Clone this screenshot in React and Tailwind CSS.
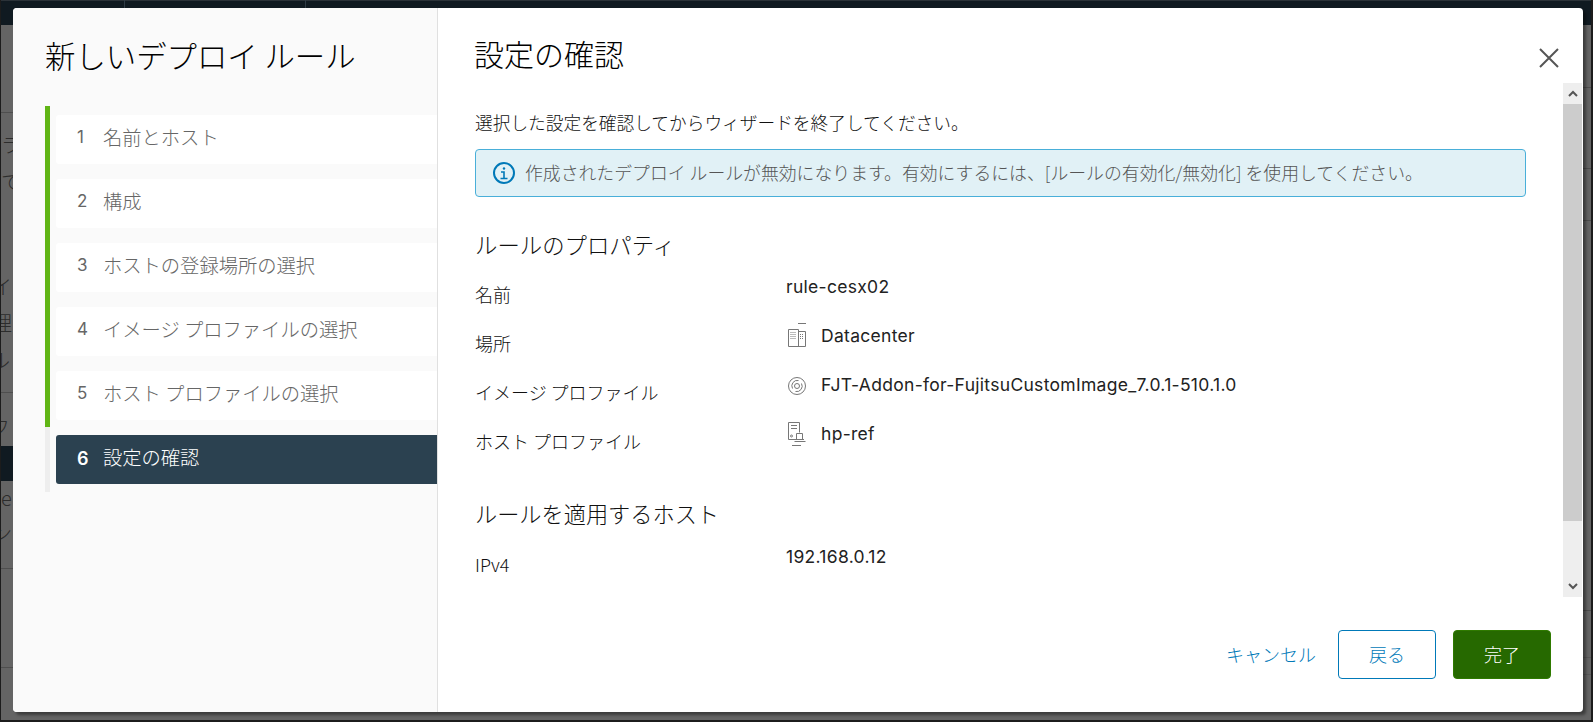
const jp = { fontFamily: '"Noto Sans CJK JP", "Noto Sans", sans-serif' };
const lat = { fontFamily: '"Inter", sans-serif' };

function Step({ n, label, active }) {
  return (
    <div className={active ? "flex items-center h-[49px] pb-[3px] rounded-l-[3px] bg-[#2b4150] text-white" : "flex items-center h-[49px] pb-[3px] rounded-l-[3px] bg-white text-[#666666]"}>
      <span className={active ? "w-[25px] ml-[21px] text-[18px] font-semibold" : "w-[25px] ml-[21px] text-[17px]"} style={lat}>{n}</span>
      <span className="ml-[1px] pb-[2px] text-[19.3px] font-light whitespace-nowrap">{label}</span>
    </div>
  );
}

function Row({ label, children }) {
  return (
    <div className="flex h-[49px]">
      <div className="w-[311px] pt-[7px] text-[18px] leading-[24px] font-light text-[#111]">{label}</div>
      <div className="flex items-start text-[17.5px] leading-[24px] tracking-[0.3px] text-[#222]" style={lat}>{children}</div>
    </div>
  );
}

function DcIcon() {
  return (
    <svg width="20" height="28" viewBox="0 0 20 28" fill="none" stroke="#777" strokeWidth="1" className="mr-[14px] ml-[1px] -mt-[2px] shrink-0">
      <path d="M11 1.5h8" />
      <path d="M1.5 7.5h10v17h-10z" />
      <path d="M11.5 9.5h7v15h-7" />
      <path d="M3.5 10.5h6M3.5 12.5h6M3.5 14.5h6M3.5 16.5h6M13 12.5h4M13 14.5h4M13 16.5h4" strokeDasharray="1 1" />
      <path d="M3 24.5h15" />
    </svg>
  );
}
function DiscIcon() {
  return (
    <svg width="20" height="20" viewBox="0 0 20 20" fill="none" stroke="#777" strokeWidth="1" className="mr-[14px] ml-[1px] mt-[3px] shrink-0">
      <circle cx="10" cy="10" r="8.5" />
      <path d="M5.5 12.5a5.5 5.5 0 0 1 6-8M14.5 7.5a5.5 5.5 0 0 1-6 8" />
      <circle cx="10" cy="10" r="2.5" />
    </svg>
  );
}
function HostIcon() {
  return (
    <svg width="20" height="26" viewBox="0 0 20 26" fill="none" stroke="#777" strokeWidth="1" className="mr-[14px] ml-[1px] -mt-[1px] shrink-0">
      <path d="M8 18.5H1.5v-17h11v10" />
      <path d="M4 4.5h6M4 7.5h6" />
      <circle cx="4.5" cy="15" r="1" />
      <path d="M9.5 12.5h6v6h-6zM7.5 20.5h11M8 18.5h9" />
      <path d="M5 24.5h9" />
    </svg>
  );
}

const frags = [
  ["ラ", 131, 1], ["て", 168, 1], ["イ", 273, -8], ["理", 309, -8], ["ル", 346, -10], ["フ", 413, -10], ["e", 484, 1], ["ン", 519, -8],
];

export default function App() {
  return (
    <div className="relative w-[1593px] h-[722px] overflow-hidden bg-[#646464]" style={jp}>
      <div className="absolute left-0 top-0 w-full h-[25px] bg-[#101a21] border-t border-[#2b3238]" />
      <div className="absolute left-[124px] top-0 w-px h-[25px] bg-[#2f3b45]" />
      <div className="absolute left-[305px] top-0 w-px h-[25px] bg-[#2f3b45]" />
      <div className="absolute left-0 top-[112px] w-[13px] h-px bg-[#4e4e4e]" />
      <div className="absolute left-0 top-[392px] w-[13px] h-px bg-[#4e4e4e]" />
      <div className="absolute left-0 top-[446px] w-[13px] h-[35px] bg-[#101a21]" />
      <div className="absolute left-0 top-[568px] w-[13px] h-px bg-[#4e4e4e]" />
      <div className="absolute left-0 top-[667px] w-[13px] h-px bg-[#4e4e4e]" />
      <div className="absolute right-0 top-[87px] w-[10px] h-px bg-[#4e4e4e]" />
      <div className="absolute right-0 top-[168px] w-[10px] h-px bg-[#4e4e4e]" />
      <div className="absolute right-0 top-[220px] w-[10px] h-px bg-[#4e4e4e]" />
      <div className="absolute right-0 top-[610px] w-[10px] h-px bg-[#4e4e4e]" />
      <div className="absolute right-0 top-[657px] w-[10px] h-[18px] border-y border-[#585858]" />
      <div className="absolute left-0 top-0 w-[13px] h-full overflow-hidden">
        {frags.map(([t, y, x]) => (
          <span key={y} className="absolute text-[20px] leading-[28px] font-light text-[#2c2c2c]" style={{ top: y, left: x }}>{t}</span>
        ))}
      </div>
      <div className="absolute inset-0 border-l border-r-2 border-b-2 border-[#1c1c1c]" />

      <div className="relative flex ml-[13px] top-[8px] w-[1570px] h-[704px] rounded-[4px] overflow-hidden bg-white shadow-[3px_3px_3px_rgba(0,0,0,0.4)]">
        <div className="w-[425px] h-full shrink-0 bg-[#fafafa] border-r border-[#e0e0e0] pl-[32px]">
          <h1 className="mt-[23px] h-[48px] text-[30.4px] leading-[48px] font-light text-black whitespace-nowrap">新しいデプロイ ルール</h1>
          <div className="relative mt-[27px] border-l-[5px] border-[#eeeeee] pl-[6px] pt-[9px] pb-[8px] flex flex-col gap-[15px]">
            <div className="absolute -left-[5px] top-0 w-[5px] h-[321px] bg-[#60b515]" />
            <Step n="1" label="名前とホスト" />
            <Step n="2" label="構成" />
            <Step n="3" label="ホストの登録場所の選択" />
            <Step n="4" label="イメージ プロファイルの選択" />
            <Step n="5" label="ホスト プロファイルの選択" />
            <Step n="6" label="設定の確認" active />
          </div>
        </div>

        <div className="flex-1 min-w-0 flex flex-col">
          <div className="relative h-[75px] shrink-0 pl-[36px]">
            <h2 className="pt-[21px] text-[30px] leading-[48px] font-light text-black">設定の確認</h2>
            <svg width="20" height="20" viewBox="0 0 20 20" className="absolute right-[24px] top-[40px]" stroke="#555" strokeWidth="2" fill="none">
              <path d="M1 1l18 18M19 1L1 19" />
            </svg>
          </div>
          <div className="flex h-[514px] shrink-0">
            <div className="flex-1 min-w-0 overflow-hidden pl-[37px] pr-[37px]">
              <p className="pt-[26px] text-[17.7px] leading-[26px] font-light text-[#111] whitespace-nowrap">選択した設定を確認してからウィザードを終了してください。</p>
              <div className="mt-[14px] h-[48px] flex items-center rounded-[4px] border border-[#49afd9] bg-[#e1f1f6] pl-[16px] text-[#555]">
                <svg width="24" height="24" viewBox="0 0 24 24" fill="none" stroke="#0079b8" strokeWidth="2" className="shrink-0">
                  <circle cx="12" cy="12" r="10" />
                  <circle cx="12" cy="7.5" r="1.2" fill="#0079b8" stroke="none" />
                  <path d="M9 11h3v6.5M8.5 17.5h7" strokeWidth="1.6" />
                </svg>
                <span className="ml-[9px] pb-[1px] text-[17.85px] font-light whitespace-nowrap">作成されたデプロイ ルールが無効になります。有効にするには、[ルールの有効化/無効化] を使用してください。</span>
              </div>
              <h3 className="mt-[31px] text-[22.4px] leading-[32px] font-light text-[#111]">ルールのプロパティ</h3>
              <div className="mt-[15px]">
                <Row label="名前">rule-cesx02</Row>
                <Row label="場所"><DcIcon />Datacenter</Row>
                <Row label="イメージ プロファイル"><DiscIcon />FJT-Addon-for-FujitsuCustomImage_7.0.1-510.1.0</Row>
                <Row label="ホスト プロファイル"><HostIcon />hp-ref</Row>
              </div>
              <h3 className="mt-[26px] text-[22.2px] leading-[32px] font-light text-[#111]">ルールを適用するホスト</h3>
              <div className="mt-[16px]">
                <Row label="IPv4">192.168.0.12</Row>
              </div>
            </div>
            <div className="w-[19px] mr-px shrink-0 flex flex-col bg-[#eeeeee]">
              <div className="h-[21px] flex items-center justify-center">
                <svg width="10" height="7" viewBox="0 0 10 7" fill="none" stroke="#555" strokeWidth="2"><path d="M1 6l4-4 4 4" /></svg>
              </div>
              <div className="h-[417px] bg-[#cccccc]" />
              <div className="flex-1 flex items-end justify-center pb-[7px]">
                <svg width="10" height="7" viewBox="0 0 10 7" fill="none" stroke="#555" strokeWidth="2"><path d="M1 1l4 4 4-4" /></svg>
              </div>
            </div>
          </div>
          <div className="flex justify-end items-start pt-[33px] pr-[32px] text-[18px]">
            <button className="h-[49px] mr-[22px] text-[#0079b8] font-light whitespace-nowrap">キャンセル</button>
            <button className="w-[98px] h-[49px] rounded-[4px] border border-[#0079b8] text-[#0079b8] font-light bg-white">戻る</button>
            <button className="w-[98px] h-[49px] ml-[17px] rounded-[4px] bg-[#266900] border border-[#2f7a00] text-white font-light">完了</button>
          </div>
        </div>
      </div>
    </div>
  );
}
